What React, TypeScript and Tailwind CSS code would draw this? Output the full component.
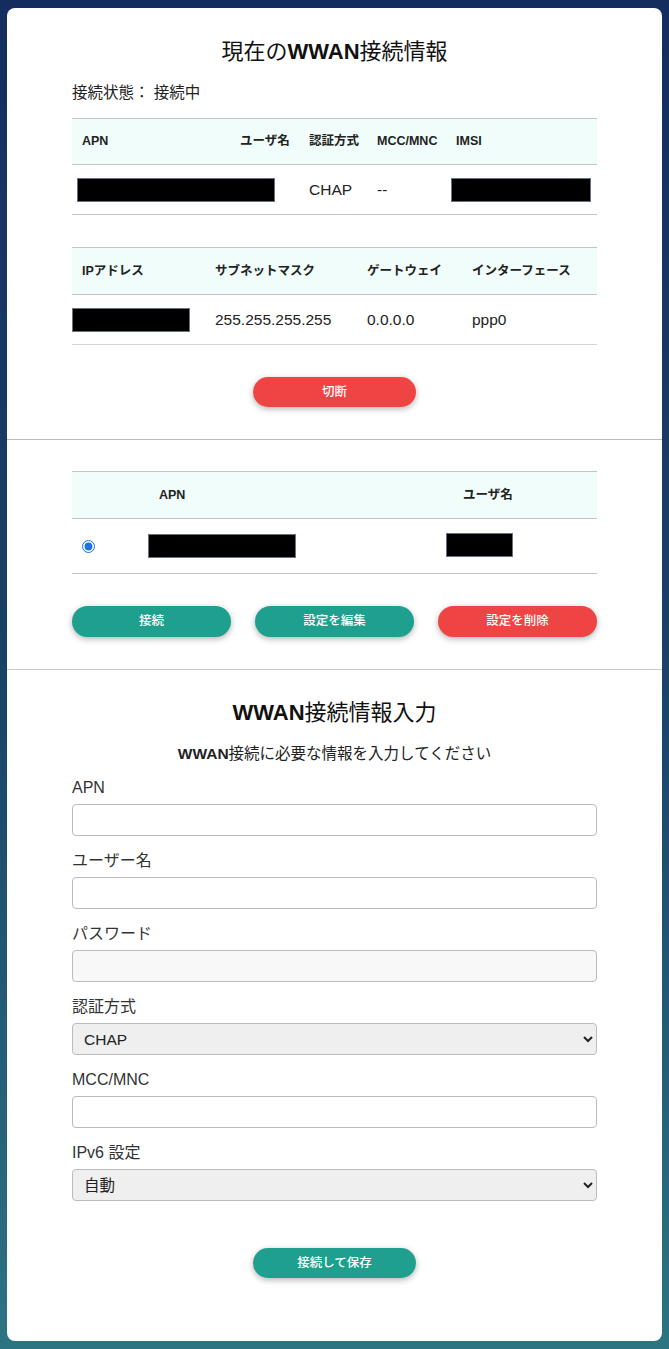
import React from "react";

// ── Helpers ────────────────────────────────────────────────────────────────────
const font = { fontFamily: '"Liberation Sans", "Noto Sans CJK JP", sans-serif' };

function Redacted({ w, h = 24 }: { w: number; h?: number }) {
  return <div className="bg-black border border-gray-500" style={{ width: w, height: h }} />;
}

function Pill({ label, red, wide }: { label: string; red?: boolean; wide?: boolean }) {
  return (
    <button
      className={
        (red ? "bg-[#ef4444]" : "bg-[#1fa08e]") +
        " text-white text-[12.5px] font-medium rounded-full shadow-[0_2px_6px_rgba(0,0,0,0.3)] " +
        (wide ? "w-[159px] h-[31px]" : "w-[163px] h-[30px]")
      }
    >
      {label}
    </button>
  );
}

function Field({ label, children }: { label: string; children: React.ReactNode }) {
  return (
    <div className="mb-[14px]">
      <div className="text-[16px] leading-[22px] text-[#333] mb-[5px]">{label}</div>
      {children}
    </div>
  );
}

const inputCls = "block w-full h-[32px] border border-[#bbb] rounded-[4px] px-[10px] text-[15.5px]";
const selectCls = "block w-full h-[32px] border border-[#bbb] rounded-[4px] pl-[7px] pr-[6px] text-[15.5px] bg-[#efefef] text-[#222]";

// ── Main Page ──────────────────────────────────────────────────────────────────
export default function App() {
  return (
    <div
      className="min-h-[1349px] bg-gradient-to-b from-[#142d5e] via-[#1b4168] to-[#2d7482] py-[8px] px-[7px]"
      style={font}
    >
      <div className="bg-white rounded-lg h-[1333px] text-[#222]">
        {/* Current connection */}
        <div className="px-[65px] pt-[29px]">
          <h2 className="text-center text-[22px] leading-[30px] text-[#111]">
            現在の<span className="font-bold">WWAN</span>接続情報
          </h2>
          <p className="mt-[15px] text-[15.5px] leading-[22px]">接続状態： 接続中</p>

          <div className="mt-[14px] text-[12.5px] font-bold">
            <div className="grid grid-cols-[158px_69px_68px_79px_150px] h-[47px] items-center bg-[#f0fdfa] border-t border-b border-[#c4c4c4]">
              <div className="pl-[10px]">APN</div>
              <div className="pl-[10px]">ユーザ名</div>
              <div className="pl-[10px]">認証方式</div>
              <div className="pl-[10px]">MCC/MNC</div>
              <div className="pl-[10px]">IMSI</div>
            </div>
            <div className="grid grid-cols-[158px_69px_68px_79px_150px] h-[50px] items-center border-b border-[#c4c4c4] text-[15.5px] font-normal">
              <div className="col-span-2 pl-[5px]">
                <Redacted w={198} />
              </div>
              <div className="pl-[10px]">CHAP</div>
              <div className="pl-[10px]">--</div>
              <div className="pl-[5px]">
                <Redacted w={140} />
              </div>
            </div>
          </div>

          <div className="mt-[32px] text-[12.5px] font-bold">
            <div className="grid grid-cols-[133px_152px_105px_134px] h-[48px] items-center bg-[#f0fdfa] border-t border-b border-[#c4c4c4]">
              <div className="pl-[10px]">IPアドレス</div>
              <div className="pl-[10px]">サブネットマスク</div>
              <div className="pl-[10px]">ゲートウェイ</div>
              <div className="pl-[10px]">インターフェース</div>
            </div>
            <div className="grid grid-cols-[133px_152px_105px_134px] h-[50px] items-center border-b border-[#d4d4d4] text-[15.5px] font-normal">
              <div>
                <Redacted w={118} />
              </div>
              <div className="pl-[10px]">255.255.255.255</div>
              <div className="pl-[10px]">0.0.0.0</div>
              <div className="pl-[10px]">ppp0</div>
            </div>
          </div>

          <div className="mt-[32px] flex justify-center">
            <Pill label="切断" red />
          </div>
        </div>

        <hr className="mt-[32px] border-0 border-t border-[#bbb]" />

        {/* Saved profiles */}
        <div className="px-[65px] pt-[31px]">
          <div className="text-[12.5px] font-bold">
            <div className="grid grid-cols-[76px_260px_188px] h-[48px] items-center bg-[#f0fdfa] border-t border-b border-[#c4c4c4]">
              <div />
              <div className="pl-[11px]">APN</div>
              <div className="pl-[55px]">ユーザ名</div>
            </div>
            <div className="grid grid-cols-[76px_260px_188px] h-[55px] items-center border-b border-[#c4c4c4]">
              <div className="pl-[10px] flex items-center">
                <input type="radio" checked readOnly className="w-[13px] h-[13px] accent-[#1a73e8]" />
              </div>
              <div>
                <Redacted w={148} />
              </div>
              <div className="pl-[38px] -mt-[2px]">
                <Redacted w={67} />
              </div>
            </div>
          </div>

          <div className="mt-[32px] flex justify-between">
            <Pill label="接続" wide />
            <Pill label="設定を編集" wide />
            <Pill label="設定を削除" red wide />
          </div>
        </div>

        <hr className="mt-[32px] border-0 border-t border-[#ccc]" />

        {/* Input form */}
        <div className="px-[65px] pt-[28px]">
          <h2 className="text-center text-[22px] leading-[30px] text-[#111]">
            <span className="font-bold">WWAN</span>接続情報入力
          </h2>
          <p className="mt-[15px] text-center text-[15.5px] leading-[22px] text-[#222]">
            <span className="font-bold">WWAN</span>接続に必要な情報を入力してください
          </p>

          <div className="mt-[12px]">
            <Field label="APN">
              <input className={inputCls} />
            </Field>
            <Field label="ユーザー名">
              <input className={inputCls} />
            </Field>
            <Field label="パスワード">
              <input type="password" className={inputCls + " bg-[#f8f8f8]"} />
            </Field>
            <Field label="認証方式">
              <select className={selectCls} defaultValue="CHAP">
                <option>CHAP</option>
                <option>PAP</option>
              </select>
            </Field>
            <Field label="MCC/MNC">
              <input className={inputCls} />
            </Field>
            <Field label="IPv6 設定">
              <select className={selectCls} defaultValue="自動">
                <option>自動</option>
              </select>
            </Field>
          </div>

          <div className="mt-[47px] flex justify-center">
            <Pill label="接続して保存" />
          </div>
        </div>
      </div>
    </div>
  );
}
